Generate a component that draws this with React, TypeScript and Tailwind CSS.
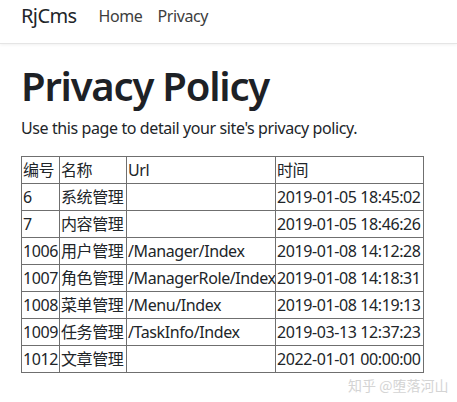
import React from "react";

const rows = [
  ["6", "系统管理", "", "2019-01-05 18:45:02"],
  ["7", "内容管理", "", "2019-01-05 18:46:26"],
  ["1006", "用户管理", "/Manager/Index", "2019-01-08 14:12:28"],
  ["1007", "角色管理", "/ManagerRole/Index", "2019-01-08 14:18:31"],
  ["1008", "菜单管理", "/Menu/Index", "2019-01-08 14:19:13"],
  ["1009", "任务管理", "/TaskInfo/Index", "2019-03-13 12:37:23"],
  ["1012", "文章管理", "", "2022-01-01 00:00:00"],
];

const font = { fontFamily: '"Noto Sans", "Noto Sans CJK SC", sans-serif' };

const cell = "border border-[#6f6f6f] px-[1px] py-[1px] whitespace-nowrap overflow-hidden";

export default function App() {
  return (
    <div className="w-[457px] h-[402px] bg-white relative overflow-hidden text-[#212529] tracking-[-0.4px]" style={font}>
      <nav className="h-[44px] border-b border-[#e5e5e5] shadow-[0_1px_3px_rgba(0,0,0,0.06)] flex items-start pt-[2px] px-[21px]">
        <span className="text-[20px] leading-[28px] text-[#212529] mr-[22px] tracking-[-0.6px]">RjCms</span>
        <span className="text-[16px] leading-[28px] text-[#3d3d3d] mr-[15px]">Home</span>
        <span className="text-[16px] leading-[28px] text-[#3d3d3d]">Privacy</span>
      </nav>
      <div className="px-[21px]">
        <h1 className="text-[40px] font-semibold leading-[1.2] mt-[18px] mb-[6px] text-[#1d2126] tracking-[-1.2px]">Privacy Policy</h1>
        <p className="text-[16px] leading-[24px] mb-[16px]">Use this page to detail your site's privacy policy.</p>
        <table className="border-collapse border border-black text-[16px] leading-[24px] table-fixed w-[402px]">
          <colgroup>
            <col className="w-[38px]" />
            <col className="w-[67px]" />
            <col className="w-[149px]" />
            <col className="w-[148px]" />
          </colgroup>
          <thead>
            <tr>
              <td className={cell}>编号</td>
              <td className={cell}>名称</td>
              <td className={cell}>Url</td>
              <td className={cell}>时间</td>
            </tr>
          </thead>
          <tbody>
            {rows.map((r) => (
              <tr key={r[0]}>
                {r.map((c, i) => (
                  <td key={i} className={cell}>
                    {c}
                  </td>
                ))}
              </tr>
            ))}
          </tbody>
        </table>
      </div>
      <div className="absolute left-[348px] top-[375px] text-[14px] tracking-normal text-[#d4d4d4]" style={{ fontFamily: '"Noto Sans CJK SC", sans-serif' }}>
        知乎 @堕落河山
      </div>
    </div>
  );
}
